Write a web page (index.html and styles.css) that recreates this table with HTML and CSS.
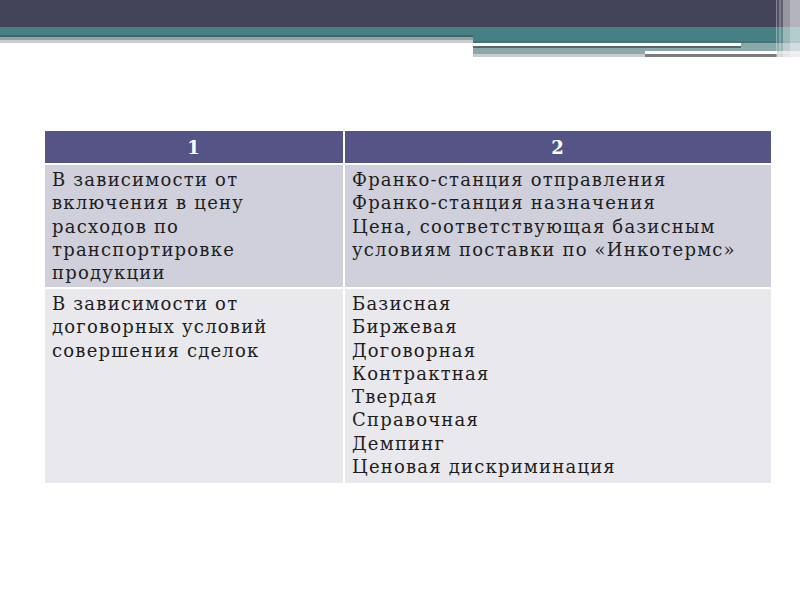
FILE: index.html
```html
<!DOCTYPE html>
<html lang="ru">
<head>
<meta charset="utf-8">
<link rel="stylesheet" href="styles.css">
</head>
<body>
<div class="slide">
  <div class="top">
    <div class="dark"></div>
    <div class="bands">
      <div class="bands-left">
        <div class="b l1"></div>
        <div class="b l2"></div>
        <div class="b l3"></div>
        <div class="b l4"></div>
      </div>
      <div class="bands-right">
        <div class="b r1"></div>
        <div class="b r2"></div>
        <div class="b r3"></div>
        <div class="b r4"></div>
        <div class="b r5"></div>
        <div class="b r6"></div>
        <div class="b r7"></div>
      </div>
    </div>
    <div class="streaks"></div>
  </div>
  <div class="grid">
    <div class="cell head">1</div>
    <div class="cell head">2</div>
    <div class="cell odd">В зависимости от<br>включения в цену<br>расходов по<br>транспортировке<br>продукции</div>
    <div class="cell odd">Франко-станция отправления<br>Франко-станция назначения<br>Цена, соответствующая базисным<br>условиям поставки по «Инкотермс»</div>
    <div class="cell even">В зависимости от<br>договорных условий<br>совершения сделок</div>
    <div class="cell even">Базисная<br>Биржевая<br>Договорная<br>Контрактная<br>Твердая<br>Справочная<br>Демпинг<br>Ценовая дискриминация</div>
  </div>
</div>
</body>
</html>
```

FILE: styles.css
```css
html, body {
  margin: 0;
  padding: 0;
  background: #ffffff;
}

.slide {
  width: 800px;
  height: 600px;
  overflow: hidden;
  background: #ffffff;
}

.top {
  position: relative;
  height: 57px;
}

.dark {
  height: 27px;
  background: #43435a;
}

.bands {
  display: flex;
  height: 30px;
}

.bands-left {
  width: 473px;
  display: flex;
  flex-direction: column;
}

.bands-right {
  flex: 1;
  display: flex;
  flex-direction: column;
}

.l1 { height: 8px; background: #478084; }
.l2 { height: 2px; background: #3e6569; }
.l3 { height: 3px; background: #8ea5a7; }
.l4 { height: 3px; background: #cdcdcd; }

.r1 { height: 14px; background: #478084; }
.r2 { height: 2px; background: #427479; }
.r3 { height: 3px; background: linear-gradient(to right, #ffffff 0 268px, #8aa8aa 268px); }
.r4 { height: 2px; background: linear-gradient(to right, #56676a 0 268px, #8aa8aa 268px); }
.r5 { height: 3px; background: #8ba8aa; }
.r6 { height: 3px; background: linear-gradient(to right, #8ba8aa 0 172px, #ffffff 172px 304px, #d8dada 304px); }
.r7 { height: 3px; background: linear-gradient(to right, #c9cccc 0 172px, #7c7c7c 172px 304px, #d0d0d0 304px); }

.streaks {
  position: absolute;
  top: 0;
  right: 0;
  width: 24px;
  height: 57px;
  background: linear-gradient(to right,
    rgba(255,255,255,0.35) 0 1px,
    rgba(255,255,255,0.08) 1px 3px,
    rgba(255,255,255,0.3) 3px 5px,
    rgba(255,255,255,0.15) 5px 7px,
    rgba(255,255,255,0.45) 7px 14px,
    rgba(255,255,255,0.6) 14px 24px);
}

.grid {
  display: grid;
  grid-template-columns: 298px 426px;
  grid-template-rows: 32px 122px 194px;
  gap: 2px;
  margin: 74px 0 0 45px;
  width: 726px;
  font-family: "DejaVu Serif", "Liberation Serif", serif;
  font-size: 18px;
  letter-spacing: 1.2px;
  line-height: 23.3px;
  color: #1e1e1e;
}

.cell {
  padding: 3px 7px 0 7px;
}

.head {
  background: #545487;
  color: #ffffff;
  font-weight: bold;
  text-align: center;
  padding: 5px 0 0 0;
}

.odd {
  background: #cfd0db;
}

.even {
  background: #e8e8ed;
}
```
